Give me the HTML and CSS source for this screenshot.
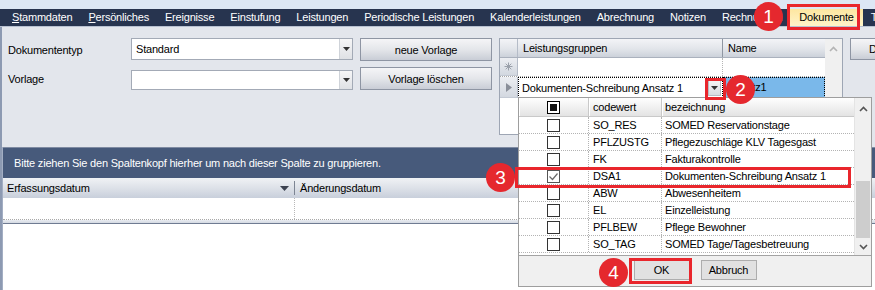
FILE: index.html
```html
<!DOCTYPE html>
<html lang="de">
<head>
<meta charset="utf-8">
<title>Dokumente</title>
<link rel="stylesheet" href="styles.css">
</head>
<body>
<div class="topstrip"></div>
<nav class="menubar">
  <span class="mi"><u>S</u>tammdaten</span>
  <span class="mi"><u>P</u>ersönliches</span>
  <span class="mi">Ereignisse</span>
  <span class="mi">Einstufung</span>
  <span class="mi">Leistungen</span>
  <span class="mi">Periodische Leistungen</span>
  <span class="mi">Kalenderleistungen</span>
  <span class="mi">Abrechnung</span>
  <span class="mi">Notizen</span>
  <span class="mi">Rechnungen</span>
  <span class="mi active">Dokumente</span>
  <span class="mi">Termine</span>
</nav>
<div class="menusep"></div>
<div class="main">
  <div class="toppanel">
    <div class="form">
      <span class="lbl">Dokumententyp</span>
      <div class="combo"><span class="ctext">Standard</span><span class="cdd"><svg width="7" height="4" viewBox="0 0 7 4"><path d="M0 0h7L3.5 4z" fill="#333"/></svg></span></div>
      <button class="btn">neue Vorlage</button>
      <span class="lbl">Vorlage</span>
      <div class="combo combo2"><span class="ctext"></span><span class="cdd"><svg width="7" height="4" viewBox="0 0 7 4"><path d="M0 0h7L3.5 4z" fill="#333"/></svg></span></div>
      <button class="btn">Vorlage löschen</button>
    </div>
    <div class="lgrid">
      <div class="lgmain">
        <div class="lgrow lghead">
          <div class="rh"></div>
          <div class="lc1 hc">Leistungsgruppen</div>
          <div class="lc2 hc">Name</div>
        </div>
        <div class="lgrow lgnew">
          <div class="rh"><svg width="9" height="9" viewBox="0 0 9 9"><path d="M4.5 0.5v8M0.5 4.5h8M1.7 1.7l5.6 5.6M7.3 1.7l-5.6 5.6" stroke="#9aa0aa" stroke-width="1"/></svg></div>
          <div class="lc1"></div>
          <div class="lc2"></div>
        </div>
        <div class="lgrow lgcur">
          <div class="rh"><svg width="6" height="9" viewBox="0 0 6 9"><path d="M0 0l6 4.5L0 9z" fill="#8a8f99"/></svg></div>
          <div class="lc1 edit"><span>Dokumenten-Schreibung Ansatz 1</span><span class="edd"><svg width="7" height="4" viewBox="0 0 7 4"><path d="M0 0h7L3.5 4z" fill="#333"/></svg></span></div>
          <div class="lc2 sel">Ansatz1</div>
        </div>
      </div>
      <div class="lgscroll"><svg class="up" width="9" height="6" viewBox="0 0 9 6"><path d="M1 5l3.5-3.5L8 5" fill="none" stroke="#b4b4b4" stroke-width="1.6"/></svg></div>
    </div>
    <button class="btn dbtn">Drucken</button>
  </div>
  <div class="docgrid">
    <div class="groupbar">Bitte ziehen Sie den Spaltenkopf hierher um nach dieser Spalte zu gruppieren.</div>
    <div class="colhdr">
      <div class="dh dc1"><span>Erfassungsdatum</span><svg width="9" height="5" viewBox="0 0 9 5"><path d="M0 0h9L4.5 5z" fill="#3c4250"/></svg></div>
      <div class="dh dc2">Änderungsdatum</div>
    </div>
    <div class="drow"><div class="dcell dc1"></div><div class="dcell dc2"></div></div>
    <div class="band"></div>
    <div class="empty"></div>
  </div>
</div>

<div class="popup">
  <div class="plist">
    <div class="ptable">
      <div class="prow phead">
        <div class="pc pcb"><span class="cb cbhead"></span></div>
        <div class="pc pcode">codewert</div>
        <div class="pc pname">bezeichnung</div>
      </div>
      <div class="prow"><div class="pc pcb"><span class="cb"></span></div><div class="pc pcode">SO_RES</div><div class="pc pname">SOMED Reservationstage</div></div>
      <div class="prow"><div class="pc pcb"><span class="cb"></span></div><div class="pc pcode">PFLZUSTG</div><div class="pc pname">Pflegezuschläge KLV Tagesgast</div></div>
      <div class="prow"><div class="pc pcb"><span class="cb"></span></div><div class="pc pcode">FK</div><div class="pc pname">Fakturakontrolle</div></div>
      <div class="prow"><div class="pc pcb"><span class="cb checked"><svg width="11" height="11" viewBox="0 0 11 11"><path d="M1.5 5.5l3 3 5-6" fill="none" stroke="#6a6a6a" stroke-width="1.2"/></svg></span></div><div class="pc pcode">DSA1</div><div class="pc pname">Dokumenten-Schreibung Ansatz 1</div></div>
      <div class="prow"><div class="pc pcb"><span class="cb"></span></div><div class="pc pcode">ABW</div><div class="pc pname">Abwesenheitem</div></div>
      <div class="prow"><div class="pc pcb"><span class="cb"></span></div><div class="pc pcode">EL</div><div class="pc pname">Einzelleistung</div></div>
      <div class="prow"><div class="pc pcb"><span class="cb"></span></div><div class="pc pcode">PFLBEW</div><div class="pc pname">Pflege Bewohner</div></div>
      <div class="prow"><div class="pc pcb"><span class="cb"></span></div><div class="pc pcode">SO_TAG</div><div class="pc pname">SOMED Tage/Tagesbetreuung</div></div>
    </div>
    <div class="pscroll">
      <svg class="sup" width="9" height="6" viewBox="0 0 9 6"><path d="M1 5l3.5-3.5L8 5" fill="none" stroke="#555" stroke-width="1.6"/></svg>
      <div class="thumb"></div>
      <svg class="sdown" width="9" height="6" viewBox="0 0 9 6"><path d="M1 1l3.5 3.5L8 1" fill="none" stroke="#555" stroke-width="1.6"/></svg>
    </div>
  </div>
  <div class="pfoot">
    <button class="pbtn">OK</button>
    <button class="pbtn">Abbruch</button>
  </div>
</div>

<div class="redbox rb1"></div>
<div class="redbox rb2"></div>
<div class="redbox rb3"></div>
<div class="redbox rb4"></div>
<div class="badge b1">1</div>
<div class="badge b2">2</div>
<div class="badge b3">3</div>
<div class="badge b4">4</div>
</body>
</html>
```
FILE: styles.css
```css
* { box-sizing: border-box; margin: 0; padding: 0; }
html, body { width: 875px; height: 290px; overflow: hidden; }
body {
  position: relative;
  font-family: "Liberation Sans", Arial, sans-serif;
  font-size: 11px;
  letter-spacing: -0.2px;
  color: #000;
  background: #e3e6ec;
}
button { font: inherit; color: inherit; letter-spacing: inherit; }

.topstrip { height: 9px; background: #dde7f4; }
.menubar {
  height: 17px;
  background: #27344f;
  display: flex;
  align-items: center;
  padding-left: 4px;
  color: #fff;
  white-space: nowrap;
  overflow: hidden;
}
.mi { padding: 0 8px; line-height: 17px; }
.mi u { text-decoration: underline; }
.mi.active { background: linear-gradient(#fde6a0, #fff4c9); color: #000; padding: 0 9px; }
.menusep { height: 1px; background: #b8c1d1; }

.main { border-left: 2px solid #8d9ab2; }
.toppanel {
  height: 120px;
  display: flex;
  align-items: flex-start;
  padding: 11px 0 0 6px;
  overflow: hidden;
}
.form {
  display: grid;
  grid-template-columns: 123px 222px 139px;
  grid-template-rows: 23px 23px;
  row-gap: 6px;
  align-items: start;
}
.lbl { align-self: center; }
.combo {
  height: 22px;
  border: 1px solid #a3aab6;
  background: #fff;
  display: flex;
  align-items: stretch;
}
.combo2 { margin-top: 3px; height: 20px; }
.ctext { flex: 1; padding-left: 4px; line-height: 20px; }
.combo2 .ctext { line-height: 18px; }
.cdd {
  width: 13px;
  background: linear-gradient(#f6f6f7, #dfe1e5);
  border-left: 1px solid #cfd3d9;
  display: flex;
  align-items: center;
  justify-content: center;
}
.btn {
  justify-self: end;
  width: 132px;
  height: 23px;
  border: 1px solid #8e95a3;
  background: linear-gradient(#f5f5f7, #e4e6ea 50%, #c9cdd6);
  text-align: center;
}

.lgrid {
  margin-left: 7px;
  width: 344px;
  height: 97px;
  flex: none;
  border: 1px solid #9ea6b4;
  background: #fff;
  display: flex;
}
.lgmain { width: 325px; }
.lgrow { display: flex; }
.rh {
  width: 18px;
  flex: none;
  background: linear-gradient(#eceef2, #d3d8e0);
  border-right: 1px solid #b5bcc8;
  border-bottom: 1px solid #c4cad4;
  display: flex;
  align-items: center;
  justify-content: center;
}
.lc1 { width: 205px; flex: none; }
.lc2 { width: 102px; flex: none; }
.lghead { height: 19px; background: linear-gradient(#f3f4f7, #e2e5ea 55%, #ccd1da); border-bottom: 1px solid #aab1bd; }
.lghead .rh { border-bottom: none; background: none; }
.hc { padding-left: 5px; line-height: 18px; }
.lghead .lc1 { border-right: 1px solid #8f96a2; }
.lgnew { height: 19px; border-bottom: 1px dotted #a9a9a9; }
.lgnew .lc1 { border-right: 1px dotted #b5b5b5; }
.lgcur { height: 21px; }
.edit {
  border: 1px dotted #000;
  display: flex;
  align-items: center;
  justify-content: space-between;
  padding-left: 3px;
  padding-right: 1px;
}
.edd {
  width: 13px;
  height: 16px;
  background: linear-gradient(#f4f4f5, #d9dce1);
  border: 1px solid #b8bcc4;
  display: flex;
  align-items: center;
  justify-content: center;
}
.sel {
  background: #7ab8ea;
  border: 1px dotted #000;
  padding-left: 4px;
  line-height: 19px;
}
.lgscroll {
  width: 17px;
  background: #f0f0f0;
  display: flex;
  justify-content: center;
}
.lgscroll .up { margin-top: 7px; }
.dbtn { margin-left: 7px; width: 80px; height: 22px; flex: none; text-align: left; padding-left: 18px; }

.docgrid { border-left: 1px solid #a3aec3; height: 143px; display: flex; flex-direction: column; }
.groupbar {
  height: 31px;
  background: #475a7b;
  border-top: 1px solid #7f8ba2;
  color: #fff;
  padding-left: 11px;
  line-height: 30px;
}
.colhdr {
  height: 20px;
  display: flex;
  background: linear-gradient(#f0f2f5, #dde1e8 50%, #c8cfdb);
}
.dh { line-height: 20px; }
.dc1 { width: 292px; flex: none; }
.dc2 { flex: 1; }
.colhdr .dc1 {
  padding-left: 4px;
  padding-right: 6px;
  display: flex;
  align-items: center;
  justify-content: space-between;
  position: relative;
}
.colhdr .dc1::after {
  content: "";
  position: absolute;
  right: 0;
  top: 3px;
  bottom: 3px;
  width: 1px;
  background: #7d8593;
}
.colhdr .dc2 { padding-left: 5px; }
.drow { height: 22px; display: flex; background: #fff; border-bottom: 1px dotted #a9a9a9; }
.dcell.dc1 { border-right: 1px dotted #b8b8b8; }
.band { height: 4px; background: linear-gradient(#e9ecf1, #d4d9e2); border-bottom: 1px solid #6f7b92; }
.empty { flex: 1; background: #fff; }

.popup {
  position: absolute;
  left: 518px;
  top: 97px;
  width: 354px;
  height: 190px;
  border: 1px solid #9e9e9e;
  background: #fff;
  display: flex;
  flex-direction: column;
}
.plist { display: flex; height: 157px; }
.ptable { width: 335px; }
.prow { display: flex; height: 17px; border-bottom: 1px dotted #b3b3b3; }
.pc { line-height: 16px; flex: none; }
.pcb { width: 70px; display: flex; align-items: center; justify-content: center; border-right: 1px dotted #b3b3b3; }
.pcode { width: 73px; padding-left: 4px; border-right: 1px dotted #b3b3b3; }
.pname { width: 192px; padding-left: 3px; }
.phead {
  height: 19px;
  background: linear-gradient(#fefefe, #f1f1f1 50%, #e3e3e3);
  border-bottom: 1px solid #c9c9c9;
}
.phead .pc { line-height: 18px; border-right: 1px solid #c9c9c9; box-shadow: inset 1px 0 0 #fff; }
.phead .pname { border-right: none; }
.cb {
  width: 13px;
  height: 13px;
  border: 1px solid #333;
  background: #fff;
  display: flex;
  align-items: center;
  justify-content: center;
}
.cb.checked { border-color: #555; }
.cbhead { border-color: #000; }
.cbhead::before { content: ""; width: 7px; height: 7px; background: #111; }
.pscroll {
  width: 17px;
  background: #f0f0f0;
  position: relative;
  border-left: 1px solid #e4e4e4;
}
.sup { position: absolute; left: 4px; top: 8px; }
.sdown { position: absolute; left: 4px; top: 146px; }
.thumb { position: absolute; left: 1px; width: 14px; top: 83px; height: 57px; background: #cdcdcd; }
.pfoot {
  flex: 1;
  background: #f0f0f0;
  border-top: 1px solid #a3a3a3;
  display: flex;
  justify-content: center;
  align-items: center;
  gap: 11px;
  padding-bottom: 2px;
}
.pbtn {
  width: 56px;
  height: 20px;
  background: #e1e1e1;
  border: 1px solid #adadad;
  text-align: center;
}

.redbox { position: absolute; border: 3px solid #e9262c; }
.rb1 { left: 787px; top: 4px; width: 73px; height: 26px; }
.rb2 { left: 705px; top: 78px; width: 21px; height: 22px; }
.rb3 { left: 515px; top: 167px; width: 336px; height: 21px; }
.rb4 { left: 629px; top: 258px; width: 63px; height: 26px; }

.badge {
  position: absolute;
  width: 29px;
  height: 29px;
  border-radius: 50%;
  background: #e5282e;
  color: #fff;
  font-family: "Liberation Sans", Arial, sans-serif;
  font-size: 19px;
  letter-spacing: 0;
  display: flex;
  align-items: center;
  justify-content: center;
}
.b1 { left: 754px; top: 2px; }
.b2 { left: 726px; top: 75px; }
.b3 { left: 486px; top: 163px; }
.b4 { left: 599px; top: 258px; }
```
